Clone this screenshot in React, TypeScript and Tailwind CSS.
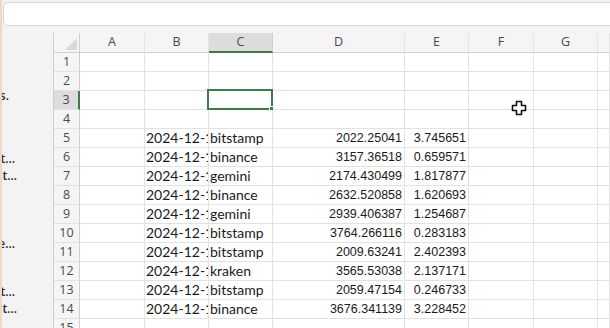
import React from 'react';

const cols = ['A', 'B', 'C', 'D', 'E', 'F', 'G', ''];

const rows: Record<number, [string, string, string, string]> = {
  5: ['2024-12-12 09:00:00', 'bitstamp', '2022.25041', '3.745651'],
  6: ['2024-12-12 09:01:00', 'binance', '3157.36518', '0.659571'],
  7: ['2024-12-12 09:02:00', 'gemini', '2174.430499', '1.817877'],
  8: ['2024-12-12 09:03:00', 'binance', '2632.520858', '1.620693'],
  9: ['2024-12-12 09:04:00', 'gemini', '2939.406387', '1.254687'],
  10: ['2024-12-12 09:05:00', 'bitstamp', '3764.266116', '0.283183'],
  11: ['2024-12-12 09:06:00', 'bitstamp', '2009.63241', '2.402393'],
  12: ['2024-12-12 09:07:00', 'kraken', '3565.53038', '2.137171'],
  13: ['2024-12-12 09:08:00', 'bitstamp', '2059.47154', '0.246733'],
  14: ['2024-12-12 09:09:00', 'binance', '3676.341139', '3.228452'],
};

// side pane fragments, cut off by the window edge
const sideItems = [
  { text: 'Columns.', cls: 'mt-[55px] pr-[44px]' },
  { text: 'Format...', cls: 'mt-[47px] pr-[38px]' },
  { text: 'Adjust...', cls: 'mt-[1px] pr-[36px]' },
  { text: 'Remove...', cls: 'mt-[52px] pr-[38px]' },
  { text: 'Format...', cls: 'mt-[32px] pr-[38px]' },
  { text: 'Adjust...', cls: 'mt-[1px] pr-[36px]' },
];

const gridCols = 'grid grid-cols-[26px_65px_64px_64px_132px_64px_65px_64px_1fr]';
const hdrFont = { fontFamily: '"Open Sans", "Noto Sans", sans-serif' };
const textFont = { fontFamily: 'Lato, "Noto Sans", sans-serif' };
const numFont = { fontFamily: '"Liberation Sans", Arial, sans-serif' };

function Cell({ row, col }: { row: number; col: number }) {
  const data = rows[row];
  const selected = row === 3 && col === 2;
  let content: React.ReactNode = null;
  if (data) {
    if (col === 1 || col === 2) {
      content = (
        <span className="block whitespace-nowrap pl-[1px] text-[14px] leading-[18px] text-[#1a1a1a]" style={textFont}>
          {data[col - 1]}
        </span>
      );
    } else if (col === 3 || col === 4) {
      content = (
        <span className="block whitespace-nowrap pr-[2px] text-right text-[12.5px] leading-[18px] text-[#1a1a1a]" style={numFont}>
          {data[col - 1]}
        </span>
      );
    }
  }
  return (
    <div className="relative h-[19px] overflow-visible border-r border-b border-[#e2e2e2] bg-white">
      <div className="h-full overflow-hidden">{content}</div>
      {selected && (
        <div className="absolute -top-[2px] -left-[2px] h-[21px] w-[66px] border-2 border-[#3f7a4f]">
          <div className="absolute -right-[4px] -bottom-[4px] h-[6px] w-[6px] border border-white bg-[#3f7a4f]" />
        </div>
      )}
    </div>
  );
}

export default function App() {
  const rowNums = Array.from({ length: 15 }, (_, i) => i + 1);

  return (
    <div className="relative h-[328px] w-[610px] overflow-hidden border-l-2 border-[#f3d6c2] bg-[#f3f3f3]">
      {/* formula bar */}
      <div className="h-[33px] pt-[2px] pl-[1px]">
        <div className="h-[24px] rounded-l-[5px] border border-r-0 border-[#d6d6d6] bg-white" />
      </div>

      <div className="flex">
        {/* side pane */}
        <div className="flex w-[52px] shrink-0 flex-col overflow-hidden border-r border-[#d0d0d0]">
          {sideItems.map((s, i) => (
            <div
              key={i}
              className={`${s.cls} flex h-[16px] justify-end whitespace-nowrap text-[12px] leading-[16px] font-semibold text-[#2a2a2a]`}
              style={hdrFont}
            >
              <span>{s.text}</span>
            </div>
          ))}
        </div>

        {/* sheet */}
        <div className="flex-1">
          <div className={gridCols}>
            {/* corner */}
            <div className="flex h-[20px] items-end justify-end border-r border-b border-[#cfcfcf] bg-[#f5f5f5] pr-[2px] pb-[2px]">
              <svg width="12" height="12" viewBox="0 0 12 12">
                <polygon points="12,0 12,12 0,12" fill="#d9d9d9" />
              </svg>
            </div>
            {cols.map((c, i) => (
              <div
                key={i}
                className={`flex h-[20px] items-center justify-center border-r text-[12.5px] text-[#4a4a4a] ${
                  i === 2
                    ? 'border-b-2 border-r-[#cfcfcf] border-b-[#3f7a4f] bg-[#dcdcdc]'
                    : 'border-b border-[#cfcfcf] border-r-[#e4e4e4] bg-[#f5f5f5]'
                }`}
                style={hdrFont}
              >
                {c}
              </div>
            ))}

            {rowNums.map((r) => (
              <React.Fragment key={r}>
                <div
                  className={`flex h-[19px] items-center justify-center border-b border-b-[#e2e2e2] text-[12.5px] text-[#4a4a4a] ${
                    r === 3
                      ? 'border-r-2 border-r-[#3f7a4f] bg-[#dcdcdc]'
                      : 'border-r border-r-[#cfcfcf] bg-[#f5f5f5]'
                  }`}
                  style={hdrFont}
                >
                  {r}
                </div>
                {cols.map((_, ci) => (
                  <Cell key={ci} row={r} col={ci} />
                ))}
              </React.Fragment>
            ))}
          </div>
        </div>
      </div>

      {/* cell cursor */}
      <svg className="absolute top-[100px] left-[509px]" width="16" height="16" viewBox="0 0 16 16">
        <path
          d="M5.5 1.5h5v4h4v5h-4v4h-5v-4h-4v-5h4z"
          fill="#ffffff"
          stroke="#111111"
          strokeWidth="1.6"
          strokeLinejoin="round"
        />
      </svg>
    </div>
  );
}
